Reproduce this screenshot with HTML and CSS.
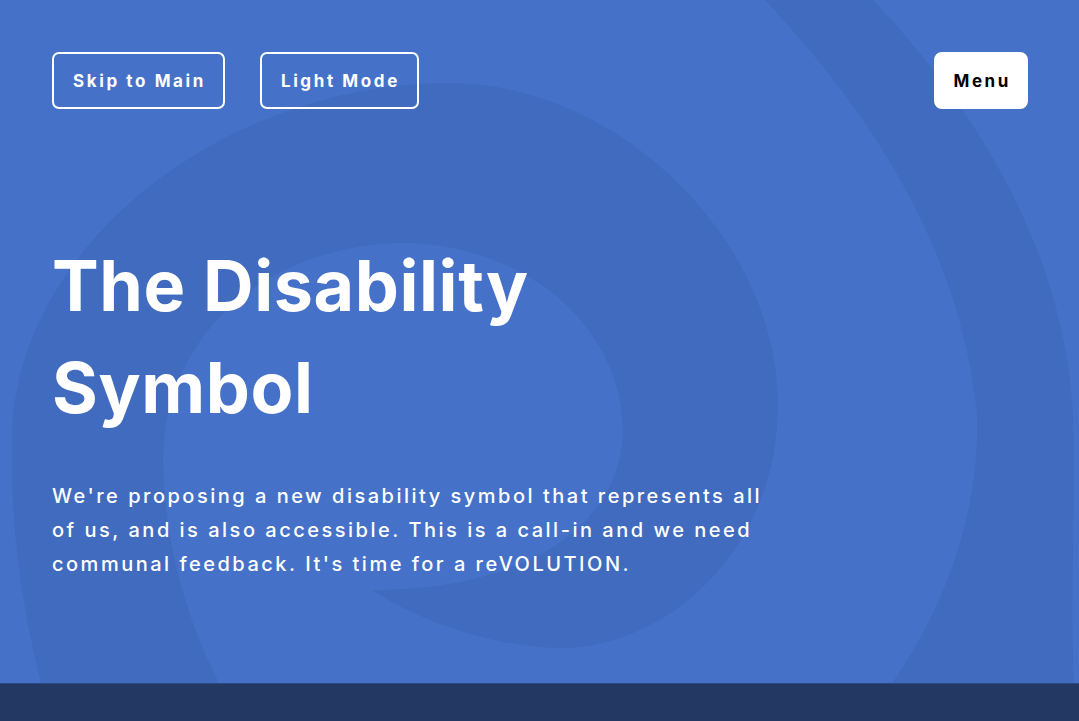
FILE: index.html
```html
<!DOCTYPE html>
<html lang="en">
<head>
<meta charset="utf-8">
<title>The Disability Symbol</title>
<link rel="stylesheet" href="styles.css">
</head>
<body>
<main class="hero">
  <svg class="hero-bg" viewBox="0 0 1079 683" width="1079" height="683" aria-hidden="true">
    <path class="ring" d="M372 590
      C 420 622, 500 650, 571 648
      C 680 640, 778 540, 778 405
      C 778 240, 620 84, 450 83
      C 220 83, 12 250, 12 440
      C 10 540, 25 620, 45 700
      L 228 700
      C 195 640, 165 560, 163 460
      C 165 330, 270 245, 404 243
      C 530 245, 623 330, 623 432
      C 620 530, 520 590, 372 590 Z"/>
    <path class="ring" d="M760 -5
      C 860 100, 960 240, 977 415
      C 980 520, 940 620, 880 700
      L 1075 700
      C 1068 600, 1078 480, 1072 400
      C 1060 250, 980 110, 868 -5 Z"/>
  </svg>
  <header class="topbar">
    <div class="topbar-left">
      <a class="btn btn-outline" href="#main">Skip to Main</a>
      <button class="btn btn-outline" type="button">Light Mode</button>
    </div>
    <button class="btn btn-solid" type="button">Menu</button>
  </header>
  <section class="intro" id="main">
    <h1 class="title">The Disability<br>Symbol</h1>
    <p class="lead">We're proposing a new disability symbol that represents all of us, and is also accessible. This is a call-in and we need communal feedback. It's time for a reVOLUTION.</p>
  </section>
</main>
<footer class="footer"></footer>
</body>
</html>
```

FILE: styles.css
```css
* { box-sizing: border-box; }

html, body {
  margin: 0;
  padding: 0;
}

body {
  font-family: "Inter", "Liberation Sans", sans-serif;
  background: #233964;
  color: #ffffff;
  overflow: hidden;
}

.hero {
  position: relative;
  height: 683px;
  background: #4572c8;
  padding: 52px 51px 0 52px;
  overflow: hidden;
}

.hero-bg {
  position: absolute;
  left: 0;
  top: 0;
  z-index: 0;
}

.ring {
  fill: #416bbe;
}

.topbar {
  position: relative;
  z-index: 1;
  display: flex;
  justify-content: space-between;
  align-items: flex-start;
}

.topbar-left {
  display: flex;
  gap: 35px;
}

.btn {
  display: inline-block;
  font-family: inherit;
  font-size: 17px;
  font-weight: 700;
  letter-spacing: 2.6px;
  line-height: 20px;
  padding: 16px 17px 16px 19px;
  border-radius: 7px;
  text-decoration: none;
  cursor: pointer;
}

.btn-outline {
  color: #ffffff;
  background: transparent;
  border: 2.5px solid #ffffff;
  padding-top: 16.5px;
  padding-bottom: 16.5px;
}

.btn-solid {
  color: #000000;
  background: #ffffff;
  border: 2.5px solid #ffffff;
  padding: 16.5px 15px 16.5px 17.5px;
  border-radius: 8px;
}

.intro {
  position: relative;
  z-index: 1;
  margin-top: 126px;
}

.title {
  margin: 0;
  font-size: 70px;
  font-weight: 700;
  line-height: 102px;
  letter-spacing: 0.6px;
}

.lead {
  margin: 40px 0 0;
  max-width: 740px;
  font-size: 20px;
  font-weight: 500;
  line-height: 34px;
  letter-spacing: 2.5px;
}

.footer {
  height: 38px;
  background: #233964;
  border-top: 1px solid #2d4a80;
}
```
